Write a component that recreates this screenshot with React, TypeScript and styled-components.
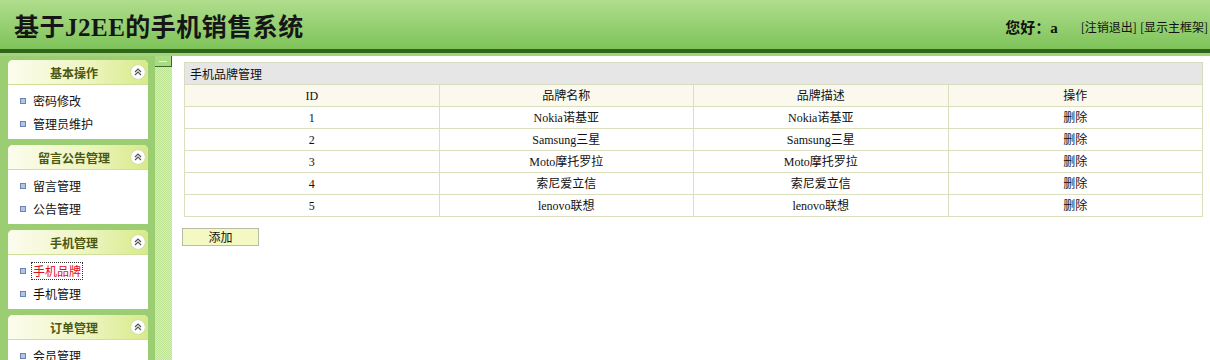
import React from 'react';
import styled, { createGlobalStyle } from 'styled-components';

const GlobalStyle = createGlobalStyle`
  html, body {
    margin: 0;
    padding: 0;
    background: #fff;
  }
  body {
    font-family: 'Liberation Serif', 'Noto Sans CJK SC', serif;
    font-size: 12px;
    color: #111;
  }
`;

const menus = [
  { title: '基本操作', items: ['密码修改', '管理员维护'] },
  { title: '留言公告管理', items: ['留言管理', '公告管理'] },
  { title: '手机管理', items: ['手机品牌', '手机管理'] },
  { title: '订单管理', items: ['会员管理', '订单管理'] },
];

const brands = [
  { id: 1, name: 'Nokia诺基亚', desc: 'Nokia诺基亚' },
  { id: 2, name: 'Samsung三星', desc: 'Samsung三星' },
  { id: 3, name: 'Moto摩托罗拉', desc: 'Moto摩托罗拉' },
  { id: 4, name: '索尼爱立信', desc: '索尼爱立信' },
  { id: 5, name: 'lenovo联想', desc: 'lenovo联想' },
];

export default function App() {
  return (
    <Page>
      <GlobalStyle />
      <Header>
        <Title>基于J2EE的手机销售系统</Title>
        <UserBox>
          <Hello>您好：a</Hello>
          <HeadLink>[注销退出]</HeadLink>
          <HeadLink>[显示主框架]</HeadLink>
        </UserBox>
      </Header>
      <Strip />
      <Body>
        <Sidebar>
          {menus.map((m) => (
            <Panel key={m.title}>
              <PanelHead>
                <PanelTitle>{m.title}</PanelTitle>
                <Toggle>
                  <svg width="8" height="8" viewBox="0 0 8 8">
                    <path d="M1 4 L4 1 L7 4 M1 7 L4 4 L7 7" fill="none" stroke="#555" strokeWidth="1.2" />
                  </svg>
                </Toggle>
              </PanelHead>
              <PanelBody>
                {m.items.map((it) => (
                  <MenuItem key={it}>
                    <Bullet />
                    <MenuLink active={it === '手机品牌'}>{it}</MenuLink>
                  </MenuItem>
                ))}
              </PanelBody>
            </Panel>
          ))}
        </Sidebar>
        <Splitter>
          <SplitBtn>
            <span />
          </SplitBtn>
        </Splitter>
        <Main>
          <Table>
            <tbody>
              <tr>
                <Caption colSpan={4}>手机品牌管理</Caption>
              </tr>
              <tr>
                <Th>ID</Th>
                <Th>品牌名称</Th>
                <Th>品牌描述</Th>
                <Th>操作</Th>
              </tr>
              {brands.map((b) => (
                <tr key={b.id}>
                  <Td>{b.id}</Td>
                  <Td>{b.name}</Td>
                  <Td>{b.desc}</Td>
                  <Td>删除</Td>
                </tr>
              ))}
            </tbody>
          </Table>
          <AddButton>添加</AddButton>
        </Main>
      </Body>
    </Page>
  );
}

const Page = styled.div`
  width: 1210px;
  height: 360px;
  overflow: hidden;
  display: flex;
  flex-direction: column;
`;

const Header = styled.div`
  height: 49px;
  flex-shrink: 0;
  display: flex;
  align-items: center;
  justify-content: space-between;
  padding: 0 2px 0 14px;
  background: linear-gradient(#b0dd8c, #7ec35a);
  border-bottom: 4px solid #2e651b;
`;

const Title = styled.h1`
  margin: 0;
  font-size: 25px;
  font-weight: bold;
  color: #161616;
  font-family: 'Liberation Serif', 'Noto Sans CJK SC', serif;
  letter-spacing: 0.5px;
`;

const UserBox = styled.div`
  display: flex;
  align-items: center;
  padding-top: 4px;
`;

const Hello = styled.span`
  font-size: 15px;
  font-weight: bold;
  margin-right: 20px;
  color: #111;
`;

const HeadLink = styled.span`
  font-size: 12px;
  margin-left: 3px;
  color: #111;
  font-family: 'Noto Sans CJK SC', sans-serif;
`;

const Strip = styled.div`
  height: 3px;
  flex-shrink: 0;
  background: #a2d37c;
`;

const Body = styled.div`
  flex: 1;
  display: flex;
`;

const Sidebar = styled.div`
  width: 140px;
  padding: 4px 7px 0 8px;
  background: #9bcd73;
  display: flex;
  flex-direction: column;
  gap: 6px;
`;

const Panel = styled.div`
  background: #fff;
  border-radius: 5px 5px 0 0;
  overflow: hidden;
`;

const PanelHead = styled.div`
  height: 24px;
  display: flex;
  align-items: center;
  justify-content: center;
  position: relative;
  background: linear-gradient(to right, #fcfcee 0%, #eef5c2 55%, #d7ea8a 100%);
  border-bottom: 1px solid #cfe09a;
`;

const PanelTitle = styled.span`
  font-weight: bold;
  font-size: 12px;
  color: #4c5812;
  margin-left: -8px;
  font-family: 'Noto Sans CJK SC', sans-serif;
`;

const Toggle = styled.span`
  position: absolute;
  right: 3px;
  top: 5px;
  width: 14px;
  height: 14px;
  border-radius: 50%;
  background: #fff;
  box-shadow: 0 0 1px #aaa;
  display: flex;
  align-items: center;
  justify-content: center;
`;

const PanelBody = styled.div`
  padding: 4px 0 4px 12px;
`;

const MenuItem = styled.div`
  height: 23px;
  display: flex;
  align-items: center;
`;

const Bullet = styled.span`
  width: 4px;
  height: 4px;
  background: #b4c4e4;
  border: 1px solid #6a84b4;
  margin-right: 6px;
`;

const MenuLink = styled.span<{ active?: boolean }>`
  font-size: 12px;
  line-height: 16px;
  font-family: 'Noto Sans CJK SC', sans-serif;
  color: ${({ active }) => (active ? '#e0101a' : '#111')};
  outline: ${({ active }) => (active ? '1px dotted #333' : 'none')};
  padding: 0 1px;
`;

const Splitter = styled.div`
  width: 17px;
  background-color: #c8e8a2;
  background-image: repeating-conic-gradient(#bfe394 0 25%, #d6efb6 0 50%);
  background-size: 2px 2px;
`;

const SplitBtn = styled.div`
  height: 10px;
  background: #a9da84;
  border-right: 1px solid #3b6a26;
  border-bottom: 1px solid #3b6a26;
  display: flex;
  align-items: center;
  justify-content: center;

  span {
    width: 8px;
    height: 1px;
    background: #e6f6d6;
  }
`;

const Main = styled.div`
  flex: 1;
  padding: 6px 7px 0 12px;
`;

const Table = styled.table`
  width: 100%;
  border-collapse: collapse;
  table-layout: fixed;
  font-size: 12px;
`;

const Cell = styled.td`
  height: 21px;
  line-height: 16px;
  padding: 0;
  border: 1px solid #dcdfbe;
  text-align: center;
  font-family: 'Liberation Serif', 'Noto Sans CJK SC', serif;
`;

const Caption = styled(Cell)`
  background: #e6e6e6;
  border-color: #d9dcc0;
  text-align: left;
  padding: 0 5px;
  font-family: 'Noto Sans CJK SC', sans-serif;
`;

const Th = styled(Cell)`
  background: #fbf9ee;
`;

const Td = styled(Cell)``;

const AddButton = styled.button`
  margin: 11px 0 0 -2px;
  width: 77px;
  height: 18px;
  padding: 0;
  line-height: 14px;
  background: #f4f8c2;
  border: 1px solid #b9bba2;
  font-size: 12px;
  font-family: 'Noto Sans CJK SC', sans-serif;
  color: #111;
`;
